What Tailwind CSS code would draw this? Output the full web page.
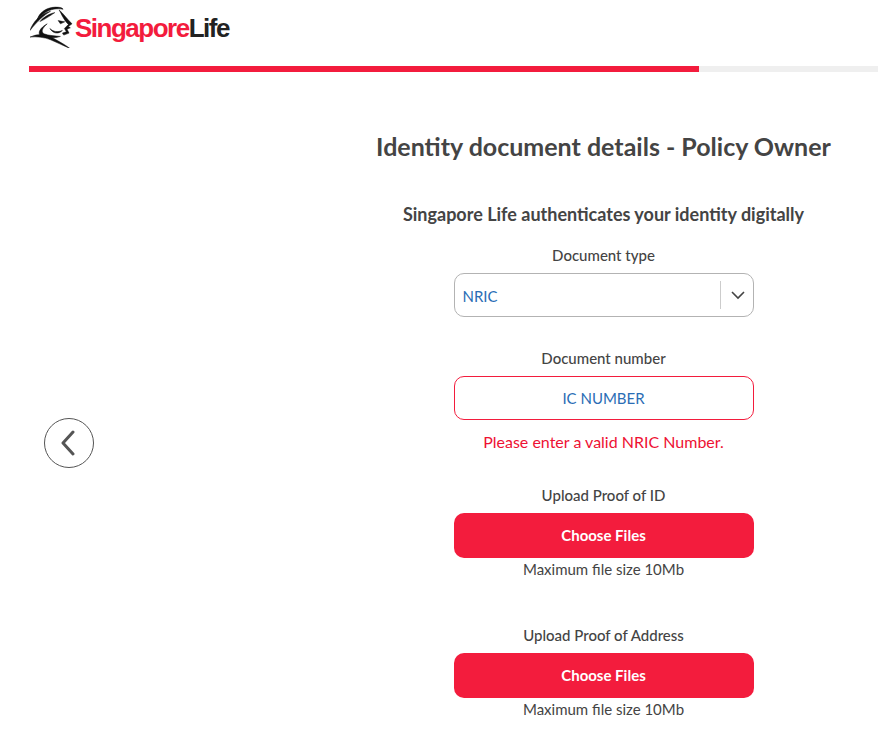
<!DOCTYPE html>
<html>
<head>
	<title>Identity document details</title>
	<script src="https://cdn.jsdelivr.net/npm/@tailwindcss/browser@4"></script>
</head>
<body class="bg-white font-['Lato',sans-serif] text-[#444444]">

	<header class="h-[66px] pl-[30px] pt-[5px] flex items-start">
		<svg class="w-[43px] h-[43px]" viewBox="30 15 130 130" fill="#111111" stroke="#111111" stroke-width="1.5" stroke-linejoin="round">
			<path d="M52 58 C60 35 85 18 118 22 C125 23 130 26 130 28 C112 24 90 28 76 38 C66 45 58 52 52 58Z"/>
			<path d="M30 92 C38 68 60 42 92 34 C72 46 52 64 30 92Z"/>
			<path d="M60 65 C68 55 85 42 105 38 C90 48 76 58 60 65Z"/>
			<path d="M118 30 C130 40 140 55 157 72 L146 80 L152 84 L142 88 L148 100 L132 106 L128 100 L140 96 L134 86 L146 74 C132 60 125 42 118 30Z"/>
			<path d="M115 62 L135 66 L122 72Z"/>
			<path d="M82 72 C68 84 62 96 72 102 C88 108 105 108 122 110 C105 116 80 116 62 108 C52 100 60 84 82 72Z"/>
			<path d="M30 112 C60 98 85 105 105 118 C122 128 138 136 150 146 C130 138 112 128 92 120 C72 112 50 110 30 112Z"/>
			<path d="M90 86 C100 96 114 98 128 92 C116 104 100 102 90 86Z"/>
		</svg>
		<div class="mt-[8px] ml-[2px] text-[26px] leading-[30px] font-bold font-['Liberation_Sans',sans-serif] tracking-[-1.5px]"><span class="text-[#f31c3d]">Singapore</span><span class="text-[#222222]">Life</span></div>
	</header>

	<div class="ml-[29px] h-[6px] bg-[#efefef]">
		<div class="h-full w-[670px] bg-[#f31c3d]"></div>
	</div>

	<main class="flex pl-[29px]">
		<div class="w-[300px] pl-[15px] pt-[346px]">
			<button class="w-[50px] h-[50px] rounded-full border border-[#555555] flex items-center justify-center">
				<svg class="w-[16px] h-[26px]" viewBox="0 0 16 26" fill="none" stroke="#555555" stroke-width="3" stroke-linecap="round" stroke-linejoin="round">
					<path d="M12 2 L2 13 L12 24"/>
				</svg>
			</button>
		</div>

		<div class="flex-1 flex flex-col items-center pt-[57px]">
			<h1 class="text-[25px] leading-[34px] font-bold">Identity document details - Policy Owner</h1>
			<h2 class="mt-[39px] text-[18px] leading-[24px] font-bold">Singapore Life authenticates your identity digitally</h2>

			<label class="mt-[18px] text-[15px] leading-[22px] font-medium">Document type</label>
			<div class="mt-[7px] w-[300px] h-[44px] border border-[#b3b3b3] rounded-[10px] flex items-center pl-[8px]">
				<span class="flex-1 pt-[2px] text-[15px] text-[#2a6db5]">NRIC</span>
				<span class="w-px h-[28px] bg-[#cccccc]"></span>
				<svg class="w-[32px] h-[12px]" viewBox="0 0 32 12" fill="none" stroke="#444444" stroke-width="1.6">
					<path d="M11 3 L17 9 L23 3"/>
				</svg>
			</div>

			<label class="mt-[30px] text-[15px] leading-[22px] font-medium">Document number</label>
			<div class="mt-[7px] w-[300px] h-[44px] border border-[#f31c3d] rounded-[10px] flex items-center justify-center text-[15px] text-[#2a6db5]">IC NUMBER</div>
			<p class="mt-[11px] text-[16px] leading-[22px] text-[#ee1133]">Please enter a valid NRIC Number.</p>

			<label class="mt-[31px] text-[15px] leading-[22px] font-medium">Upload Proof of ID</label>
			<button class="mt-[7px] w-[300px] h-[45px] rounded-[10px] bg-[#f31c3d] text-white text-[15px] font-bold">Choose Files</button>
			<p class="text-[15px] leading-[22px]">Maximum file size 10Mb</p>

			<label class="mt-[44px] text-[15px] leading-[22px] font-medium">Upload Proof of Address</label>
			<button class="mt-[7px] w-[300px] h-[45px] rounded-[10px] bg-[#f31c3d] text-white text-[15px] font-bold">Choose Files</button>
			<p class="text-[15px] leading-[22px]">Maximum file size 10Mb</p>
		</div>
	</main>

</body>
</html>
